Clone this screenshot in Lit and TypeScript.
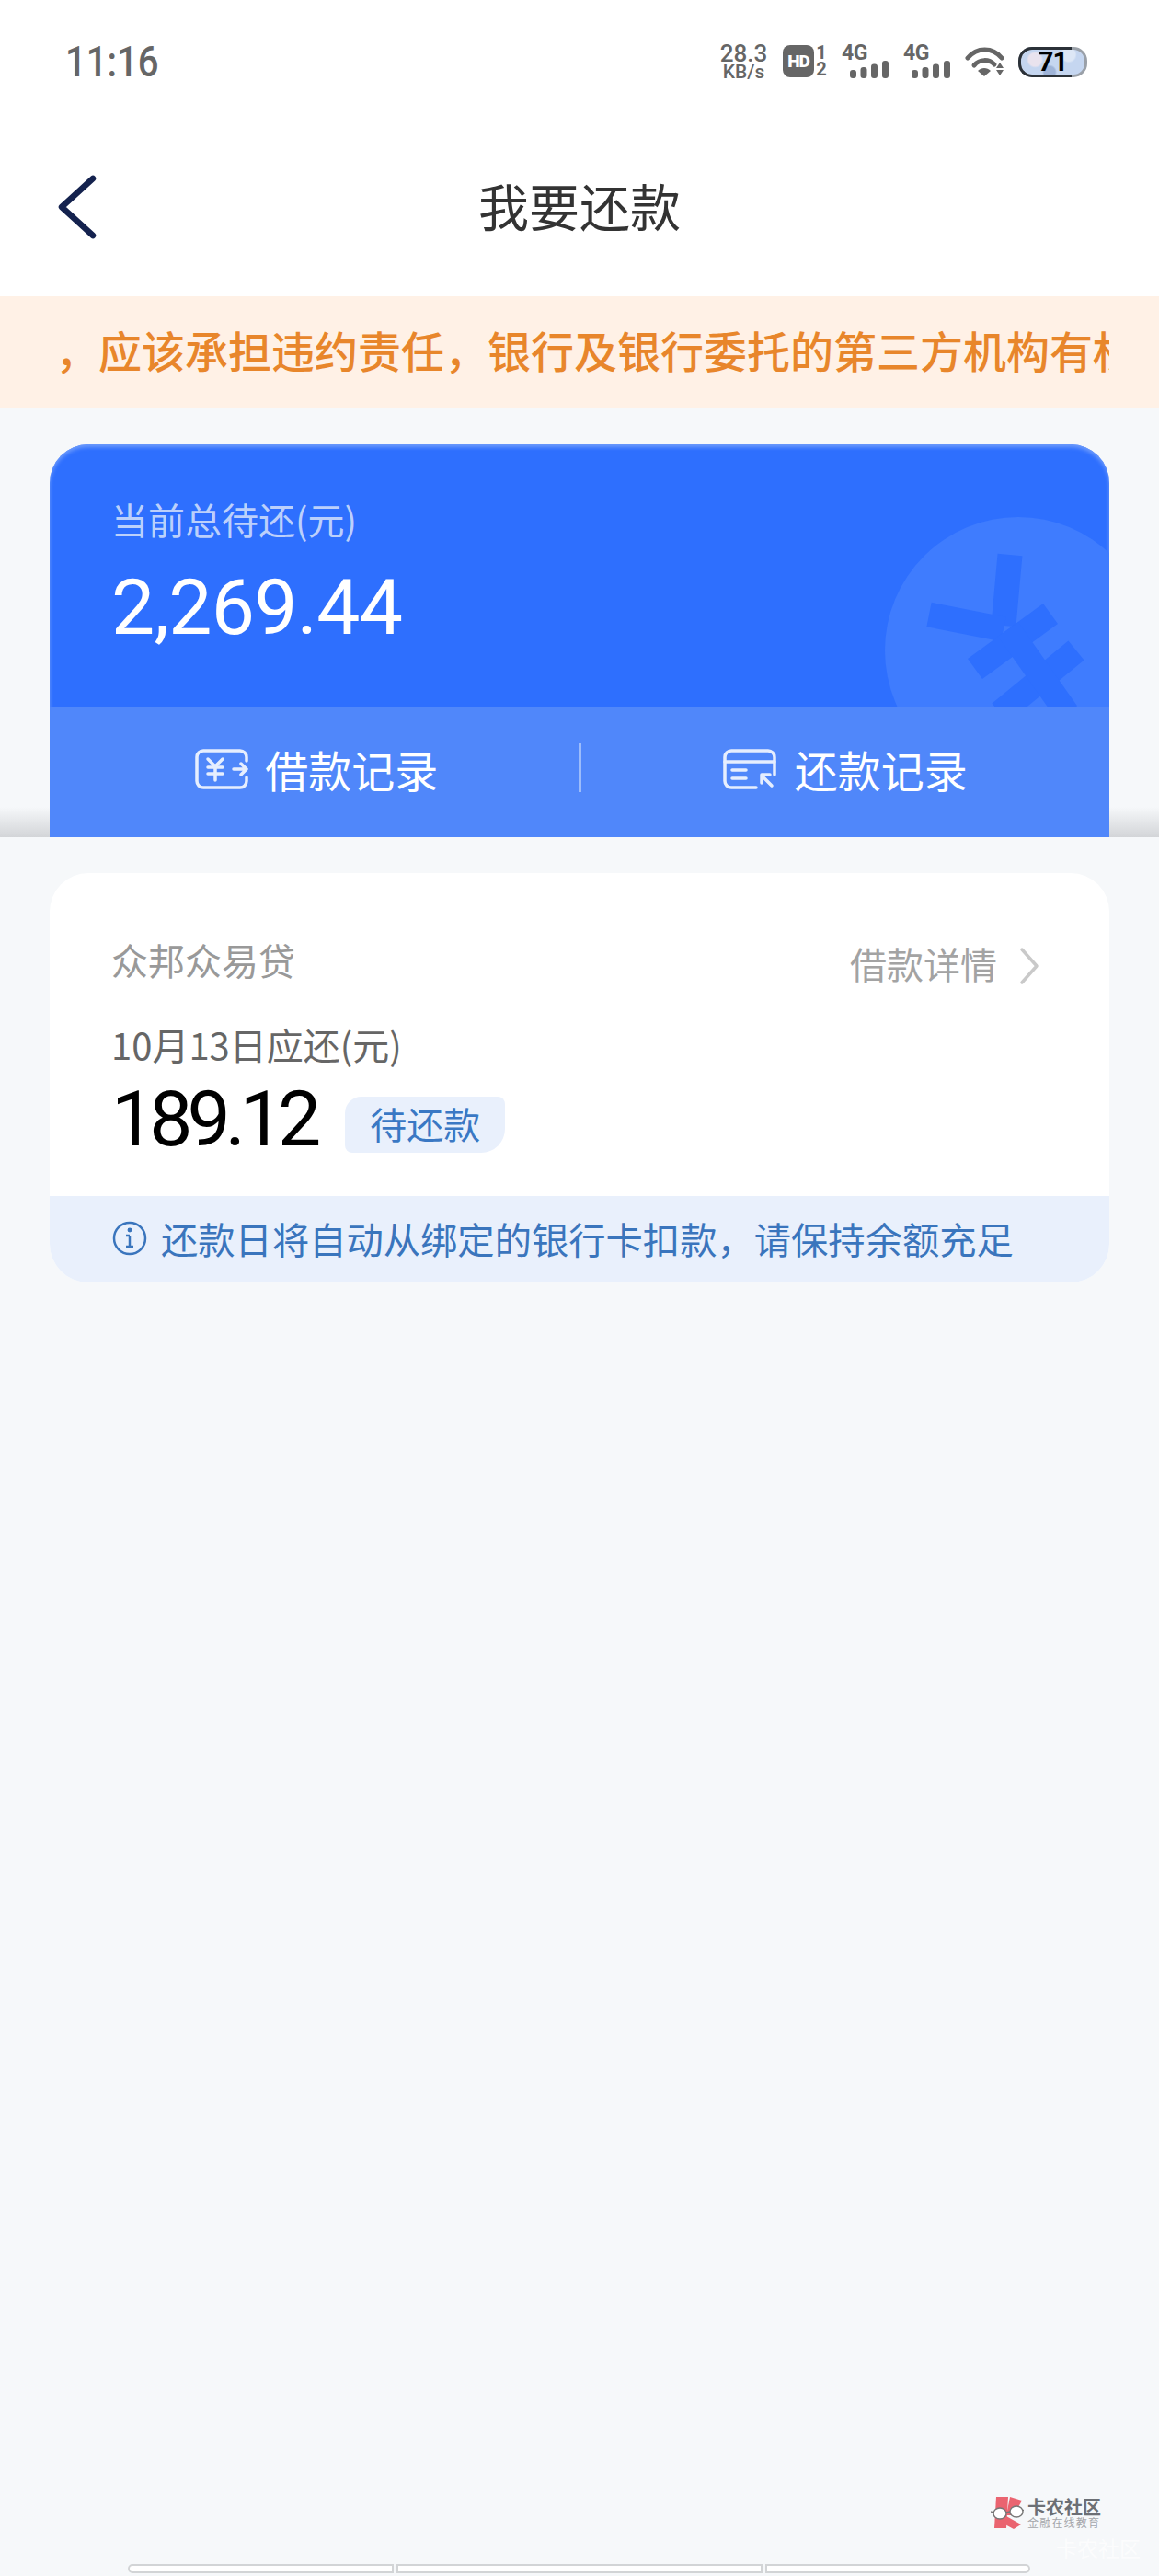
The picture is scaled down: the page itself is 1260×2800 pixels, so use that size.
import { LitElement, html, css } from "lit";
import { customElement } from "lit/decorators.js";

@customElement("app-root")
export class AppRoot extends LitElement {
  static styles = css`
    :host { display: block; width: 1260px; height: 2800px; overflow: hidden; font-family: "Noto Sans CJK SC", "Noto Sans", sans-serif; }
    * { box-sizing: border-box; }
    .page { position: relative; display: flex; flex-direction: column; width: 1260px; height: 2800px; background: #f6f8fa; }

    .status { height: 140px; background: #fff; display: flex; padding: 48px 78px 0 71px; color: #666; }
    .time { font: 500 46px/38px Roboto, sans-serif; height: 38px; transform: scaleX(.87); transform-origin: left center; }
    .sys { margin-left: auto; display: flex; align-items: flex-start; height: 38px; font-family: Roboto, sans-serif; }
    .speed { width: 53px; margin-right: 16px; display: flex; flex-direction: column; align-items: center; font-weight: 500; }
    .speed b { font: 500 26px/21px Roboto, sans-serif; }
    .speed span { font: 500 21px/18px Roboto, sans-serif; }
    .hd { width: 50px; margin-right: 14px; display: flex; margin-top: 1px; }
    .hd .box { width: 34px; height: 35px; background: #666; border-radius: 8px; color: #fff; font: 900 19px/35px Roboto, sans-serif; text-align: center; letter-spacing: -1px; }
    .hd .nums { width: 16px; display: flex; flex-direction: column; align-items: center; font: 700 20px/17.5px Roboto, sans-serif; }
    .sig { width: 51px; margin-right: 16px; display: flex; flex-direction: column; margin-top: 1px; }
    .sig span { font: 700 23px/17px Roboto, sans-serif; letter-spacing: -0.5px; }
    .sig svg { margin-left: 9px; display: block; }
    .wifi { display: block; width: 43px; margin-right: 15px; margin-top: 3px; }
    .batt { position: relative; width: 75px; height: 33px; margin-top: 3px; border-radius: 15px; border: 3px solid #9aa0a8; display: flex; align-items: center; justify-content: center;
      background: radial-gradient(circle at 22% 40%, #e9e3ee 0 7px, transparent 9px), radial-gradient(circle at 45% 90%, #9fb4d8 0 6px, transparent 8px), radial-gradient(circle at 75% 20%, #dde7f6 0 7px, transparent 9px), #c5d6f0; color: #000; font: 700 29px/27px Roboto, sans-serif; letter-spacing: -1px; }
    .batt::before { content: ""; position: absolute; left: -3px; top: -3px; bottom: -3px; width: 55px; border: 3px solid #2b3138; border-right: 0; border-radius: 15px 0 0 15px; }
    .batt span { position: relative; }

    .nav { height: 182px; background: #fff; display: flex; align-items: center; justify-content: center; position: relative; padding-bottom: 18px; }
    .back { position: absolute; left: 62px; top: 50px; display: block; }
    .title { font-size: 55px; line-height: 70px; color: #333; }

    .notice { height: 121px; background: #fff1e6; padding: 0 54px 6px 60px; display: flex; align-items: center; }
    .notice div { overflow: hidden; white-space: nowrap; font-size: 47px; line-height: 64px; color: #e8862b; font-weight: 500; width: 100%; }

    .summary { height: 467px; padding: 40px 54px 0; background: linear-gradient(to bottom, rgba(205,207,210,0) 0, rgba(205,207,210,0) 434px, #d3d5d8 467px); }
    .bluecard { position: relative; height: 427px; border-radius: 42px 42px 0 0; overflow: hidden; background: #2e6ffe; box-shadow: inset 0 3px 4px #6f9cfb; display: flex; flex-direction: column; }
    .deco { position: absolute; left: 0; top: 0; display: block; }
    .main { position: relative; height: 286px; padding: 57px 67px 0; }
    .label { font-size: 40px; line-height: 48px; color: #bcd0fb; }
    .amount { font: 400 84px/90px Roboto, sans-serif; color: #fff; margin-top: 28px; letter-spacing: -0.7px; }
    .actions { position: relative; flex: 1; background: #5087fa; display: grid; grid-template-columns: 1fr 3px 1fr; align-items: center; color: #fff; padding-bottom: 8px; }
    .act { display: flex; align-items: center; justify-content: center; font-size: 47px; line-height: 60px; gap: 20px; }
    .act svg { display: block; }
    .act.first { padding-left: 6px; gap: 18px; }
    .divider { height: 53px; width: 3px; background: #9cbcfb; margin-top: -3px; }

    .sheet { flex: 1; display: flex; flex-direction: column; padding: 39px 54px 0; background: #f6f8fa; }
    .card { height: 445px; background: #fff; border-radius: 42px; overflow: hidden; display: flex; flex-direction: column; }
    .body { flex: 1; padding: 0 67px; }
    .head { display: flex; justify-content: space-between; padding-top: 69px; }
    .name { font-size: 40px; line-height: 50px; color: #999; }
    .detail { display: flex; align-items: center; font-size: 40px; line-height: 50px; color: #a3a3a3; margin-top: 4px; margin-right: 9px; gap: 24px; }
    .detail svg { display: block; margin-top: 6px; }
    .due { font-size: 40px; line-height: 50px; color: #666; margin-top: 38px; letter-spacing: 0; }
    .row { display: flex; align-items: center; margin-top: 14px; }
    .num { font: 400 84px/86px Roboto, sans-serif; color: #000; letter-spacing: -6px; }
    .tag { margin-left: 32px; margin-top: 10px; width: 174px; height: 61px; background: #e9f0fc; border-radius: 18px 8px 26px 8px; color: #3a78c4; font-size: 40px; line-height: 58px; text-align: center; }
    .tip { height: 94px; background: #e9f0fc; display: flex; align-items: center; padding: 0 0 3px 68px; color: #3a75bd; font-size: 40.3px; gap: 15px; }
    .tip svg { display: block; flex: none; }
    .tip span { line-height: 50px; }

    .foot { margin: auto -54px 0; display: flex; flex-direction: column; }
    .logo { display: flex; justify-content: flex-end; align-items: center; padding-right: 63px; gap: 4px; }
    .logo svg { display: block; }
    .logotxt { display: flex; flex-direction: column; }
    .logotxt b { font-size: 20px; line-height: 20px; font-weight: 700; color: #6c6f74; }
    .logotxt span { font-size: 12px; line-height: 14px; color: #a4a6aa; letter-spacing: 1.2px; }
    .mark { position: absolute; right: 20px; top: 2756px; font-size: 23px; line-height: 26px; color: #fff; opacity: .7; }
    .bars { display: flex; gap: 3px; padding: 37px 140px 3px 139px; }
    .bars i { display: block; height: 10px; background: #fff; border: 2px solid #d2d4d6; }
    .bars i:nth-child(1) { width: 289px; border-radius: 5px 0 0 5px; }
    .bars i:nth-child(2) { width: 398px; }
    .bars i:nth-child(3) { width: 288px; border-radius: 0 5px 5px 0; }
  `;

  private sig() {
    return html`<div class="sig"><span>4G</span>
      <svg width="42" height="19" viewBox="0 0 42 19" fill="#666">
        <rect x="0" y="10" width="7" height="9" rx="3"></rect>
        <rect x="11.5" y="7" width="7" height="12" rx="3"></rect>
        <rect x="23" y="3.5" width="7" height="15.5" rx="3"></rect>
        <rect x="35" y="0" width="7" height="19" rx="3"></rect>
      </svg></div>`;
  }

  render() {
    return html`<div class="page">
      <div class="status">
        <div class="time">11:16</div>
        <div class="sys">
          <div class="speed"><b>28.3</b><span>KB/s</span></div>
          <div class="hd"><div class="box">HD</div><div class="nums"><span>1</span><span>2</span></div></div>
          ${this.sig()}
          ${this.sig()}
          <svg class="wifi" width="43" height="33" viewBox="0 0 43 33">
            <path d="M3 12 C13 0 30 0 40 12" fill="none" stroke="#666" stroke-width="5" stroke-linecap="round"></path>
            <path d="M10 20 C16 13 26 13 32 19" fill="none" stroke="#666" stroke-width="5" stroke-linecap="round"></path>
            <path d="M14 26 L21 32 L28 26 C24 22 18 22 14 26 Z" fill="#666"></path>
            <path d="M34 23 L38 17 L42 23 Z M34 25 H42 L38 31 Z" fill="#666"></path>
          </svg>
          <div class="batt"><span>71</span></div>
        </div>
      </div>

      <div class="nav">
        <svg class="back" width="44" height="70" viewBox="0 0 44 70">
          <path d="M39 4 L5 35 L39 66" fill="none" stroke="#14224e" stroke-width="6.5" stroke-linecap="round" stroke-linejoin="round"></path>
        </svg>
        <div class="title">我要还款</div>
      </div>

      <div class="notice"><div>，应该承担违约责任，银行及银行委托的第三方机构有权</div></div>

      <div class="summary">
        <div class="bluecard">
          <svg class="deco" width="1152" height="286" viewBox="54 483 1152 286">
            <circle cx="1107" cy="707" r="145" fill="#3f7cfe"></circle>
            <g fill="none" stroke="#2e6ffe" stroke-width="27">
              <path d="M1098 603 L1091 680"></path>
              <path d="M1010 668 L1091 684"></path>
              <path d="M1060 727 L1142 667"></path>
              <path d="M1087 775 L1170 707"></path>
              <path d="M1096 684 L1160 775"></path>
            </g>
          </svg>
          <div class="main">
            <div class="label">当前总待还(元)</div>
            <div class="amount">2,269.44</div>
          </div>
          <div class="actions">
            <div class="act first">
              <svg width="58" height="44" viewBox="0 0 58 44" fill="none" stroke="#e6eefe" stroke-width="3.5" stroke-linecap="round" stroke-linejoin="round">
                <path d="M56 13 V9 a7 7 0 0 0 -7 -7 H9 a7 7 0 0 0 -7 7 V35 a7 7 0 0 0 7 7 H49 a7 7 0 0 0 7 -7 V31"></path>
                <path d="M14 11 L22 19 L30 11 M14 20 H30 M14 27 H30 M22 20 V34"></path>
                <path d="M42 22 H56 M50 16 L56 22 L50 28"></path>
              </svg>
              <span>借款记录</span>
            </div>
            <div class="divider"></div>
            <div class="act">
              <svg width="58" height="44" viewBox="0 0 58 44" fill="none" stroke="#e6eefe" stroke-width="3.5" stroke-linecap="round" stroke-linejoin="round">
                <path d="M56 28 V9 a7 7 0 0 0 -7 -7 H9 a7 7 0 0 0 -7 7 V35 a7 7 0 0 0 7 7 H36"></path>
                <path d="M2 14 H56 M10 23 H25 M10 32 H25"></path>
                <path d="M53 40 L42 29 M42 37 V28 H51"></path>
              </svg>
              <span>还款记录</span>
            </div>
          </div>
        </div>
      </div>

      <div class="sheet">
        <div class="card">
          <div class="body">
            <div class="head">
              <div class="name">众邦众易贷</div>
              <div class="detail"><span>借款详情</span>
                <svg width="22" height="42" viewBox="0 0 22 42"><path d="M3 3 L19 21 L3 39" fill="none" stroke="#c9c9c9" stroke-width="3.5" stroke-linecap="round" stroke-linejoin="round"></path></svg>
              </div>
            </div>
            <div class="due">10月13日应还(元)</div>
            <div class="row"><div class="num">189.12</div><div class="tag">待还款</div></div>
          </div>
          <div class="tip">
            <svg width="38" height="38" viewBox="0 0 38 38" fill="none" stroke="#3a75bd" stroke-width="2.5">
              <circle cx="19" cy="19" r="17"></circle>
              <path d="M19 16 V28 M15 16 H19 M15 28 H23"></path>
              <circle cx="19" cy="10" r="1.2" fill="#3a75bd"></circle>
            </svg>
            <span>还款日将自动从绑定的银行卡扣款，请保持余额充足</span>
          </div>
        </div>

        <div class="foot">
          <div class="logo">
            <svg width="36" height="36" viewBox="0 0 36 36">
              <path d="M6 0 H19 L17 34 H4 Z" fill="#ea6470"></path>
              <path d="M21 0 L34 4 L25 20 H17 Z" fill="#ea6470"></path>
              <path d="M17 21 L33 30 L25 35 L12 28 Z" fill="#ea6470"></path>
              <ellipse cx="10" cy="18" rx="7" ry="6" fill="#fff" stroke="#777" stroke-width="1.4"></ellipse>
              <ellipse cx="28" cy="16" rx="7" ry="6" fill="#fff" stroke="#777" stroke-width="1.4"></ellipse>
              <path d="M17 17 L21 16 M3 17 L0 16 M35 15 L36 14" stroke="#777" stroke-width="1.4" fill="none"></path>
            </svg>
            <div class="logotxt"><b>卡农社区</b><span>金融在线教育</span></div>
          </div>
          <div class="mark">卡农社区</div>
          <div class="bars"><i></i><i></i><i></i></div>
        </div>
      </div>
    </div>`;
  }
}
